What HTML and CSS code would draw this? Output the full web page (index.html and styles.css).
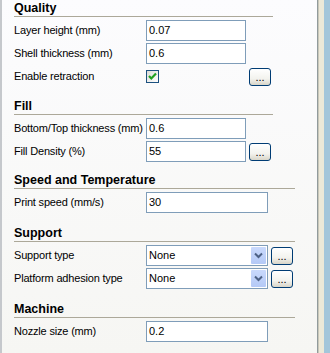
FILE: index.html
```html
<!DOCTYPE html>
<html>
<head>
<meta charset="utf-8">
<link rel="stylesheet" href="styles.css">
</head>
<body>
<div class="screen">
  <div class="panel">
    <section class="sec narrow">
      <h2 class="hdr">Quality</h2>
      <div class="lbl">Layer height (mm)</div><div class="inp">0.07</div><div></div>
      <div class="lbl">Shell thickness (mm)</div><div class="inp">0.6</div><div></div>
      <div class="lbl">Enable retraction</div>
      <div class="cell"><span class="chk"><svg width="11" height="11" viewBox="0 0 11 11"><path d="M2 5 L4.3 7.5 L9 2.5" fill="none" stroke="#21a121" stroke-width="2.2"/></svg></span></div>
      <div class="cell"><span class="btn">...</span></div>
    </section>
    <section class="sec narrow s-fill">
      <h2 class="hdr">Fill</h2>
      <div class="lbl">Bottom/Top thickness (mm)</div><div class="inp">0.6</div><div></div>
      <div class="lbl">Fill Density (%)</div><div class="inp">55</div>
      <div class="cell"><span class="btn">...</span></div>
    </section>
    <section class="sec wide s-speed">
      <h2 class="hdr">Speed and Temperature</h2>
      <div class="lbl">Print speed (mm/s)</div><div class="inp">30</div><div></div>
    </section>
    <section class="sec wide s-support">
      <h2 class="hdr">Support</h2>
      <div class="lbl">Support type</div>
      <div class="combo"><span class="val">None</span><span class="arrow"><svg width="15" height="17" viewBox="0 0 15 17"><path d="M4 6.5 L7.5 10 L11 6.5" fill="none" stroke="#4d6185" stroke-width="2"/></svg></span></div>
      <div class="cell"><span class="btn">...</span></div>
      <div class="lbl">Platform adhesion type</div>
      <div class="combo"><span class="val">None</span><span class="arrow"><svg width="15" height="17" viewBox="0 0 15 17"><path d="M4 6.5 L7.5 10 L11 6.5" fill="none" stroke="#4d6185" stroke-width="2"/></svg></span></div>
      <div class="cell"><span class="btn">...</span></div>
    </section>
    <section class="sec wide s-machine">
      <h2 class="hdr">Machine</h2>
      <div class="lbl">Nozzle size (mm)</div><div class="inp">0.2</div><div></div>
    </section>
  </div>
  <div class="edge-dark"></div>
  <div class="edge-light"></div>
  <div class="edge-beige"></div>
  <div class="edge-blue"></div>
</div>
</body>
</html>
```

FILE: styles.css
```css
html, body {
  margin: 0;
  padding: 0;
}
body {
  font-family: "Liberation Sans", Arial, sans-serif;
  font-size: 11px;
  color: #000;
}
.screen {
  display: flex;
  width: 330px;
  height: 353px;
  overflow: hidden;
}
.panel {
  flex: 0 0 317px;
  border-left: 2px solid #c5c8cc;
  padding-left: 12px;
  box-sizing: border-box;
  background: linear-gradient(#fcfcfe, #f6f6f3);
}
.edge-dark { flex: 0 0 1px; background: #919b9c; }
.edge-light { flex: 0 0 1px; background: #c9c7ba; }
.edge-beige { flex: 0 0 5px; background: #ece9d8; }
.edge-blue { flex: 1 1 auto; background: #a3c6da; }

.sec {
  display: grid;
  width: max-content;
  row-gap: 2px;
  align-items: center;
}
.narrow { grid-template-columns: 132px 100px 27px; }
.wide { grid-template-columns: 132px 122px 27px; }
.s-fill { margin-top: 11px; }
.s-speed { margin-top: 10px; }
.s-support { margin-top: 12px; }
.s-machine { margin-top: 12px; }

.hdr {
  grid-column: 1 / -1;
  margin: 0 0 1px 0;
  font-size: 12.5px;
  font-weight: bold;
  line-height: 16px;
  border-bottom: 1px solid #aca899;
  align-self: start;
}
.lbl {
  line-height: 21px;
  height: 21px;
  white-space: nowrap;
  letter-spacing: -0.18px;
}
.inp {
  height: 21px;
  box-sizing: border-box;
  border: 1px solid #7f9db9;
  background: #fff;
  padding-left: 2px;
  line-height: 19px;
}
.cell {
  display: flex;
  align-items: center;
  height: 21px;
}
.chk {
  display: flex;
  align-items: center;
  justify-content: center;
  width: 13px;
  height: 13px;
  box-sizing: border-box;
  border: 1px solid #1c5180;
  background: linear-gradient(135deg, #dcdcd7, #fff);
}
.btn {
  display: flex;
  align-items: center;
  justify-content: center;
  margin-left: 3px;
  width: 22px;
  height: 18px;
  box-sizing: border-box;
  border: 1px solid #003c74;
  border-radius: 3px;
  background: linear-gradient(#ffffff, #f3f3ee 60%, #d8d5c8);
  font-size: 11px;
  line-height: 14px;
}
.combo {
  display: flex;
  align-items: center;
  height: 21px;
  box-sizing: border-box;
  border: 1px solid #7f9db9;
  background: #fff;
  padding-left: 2px;
}
.val {
  flex: 1 1 auto;
  line-height: 19px;
}
.arrow {
  display: flex;
  width: 15px;
  height: 17px;
  margin-right: 1px;
  margin-bottom: 1px;
  border-radius: 1px;
  background: linear-gradient(#c9d9fc, #b4c9f6);
}
```
